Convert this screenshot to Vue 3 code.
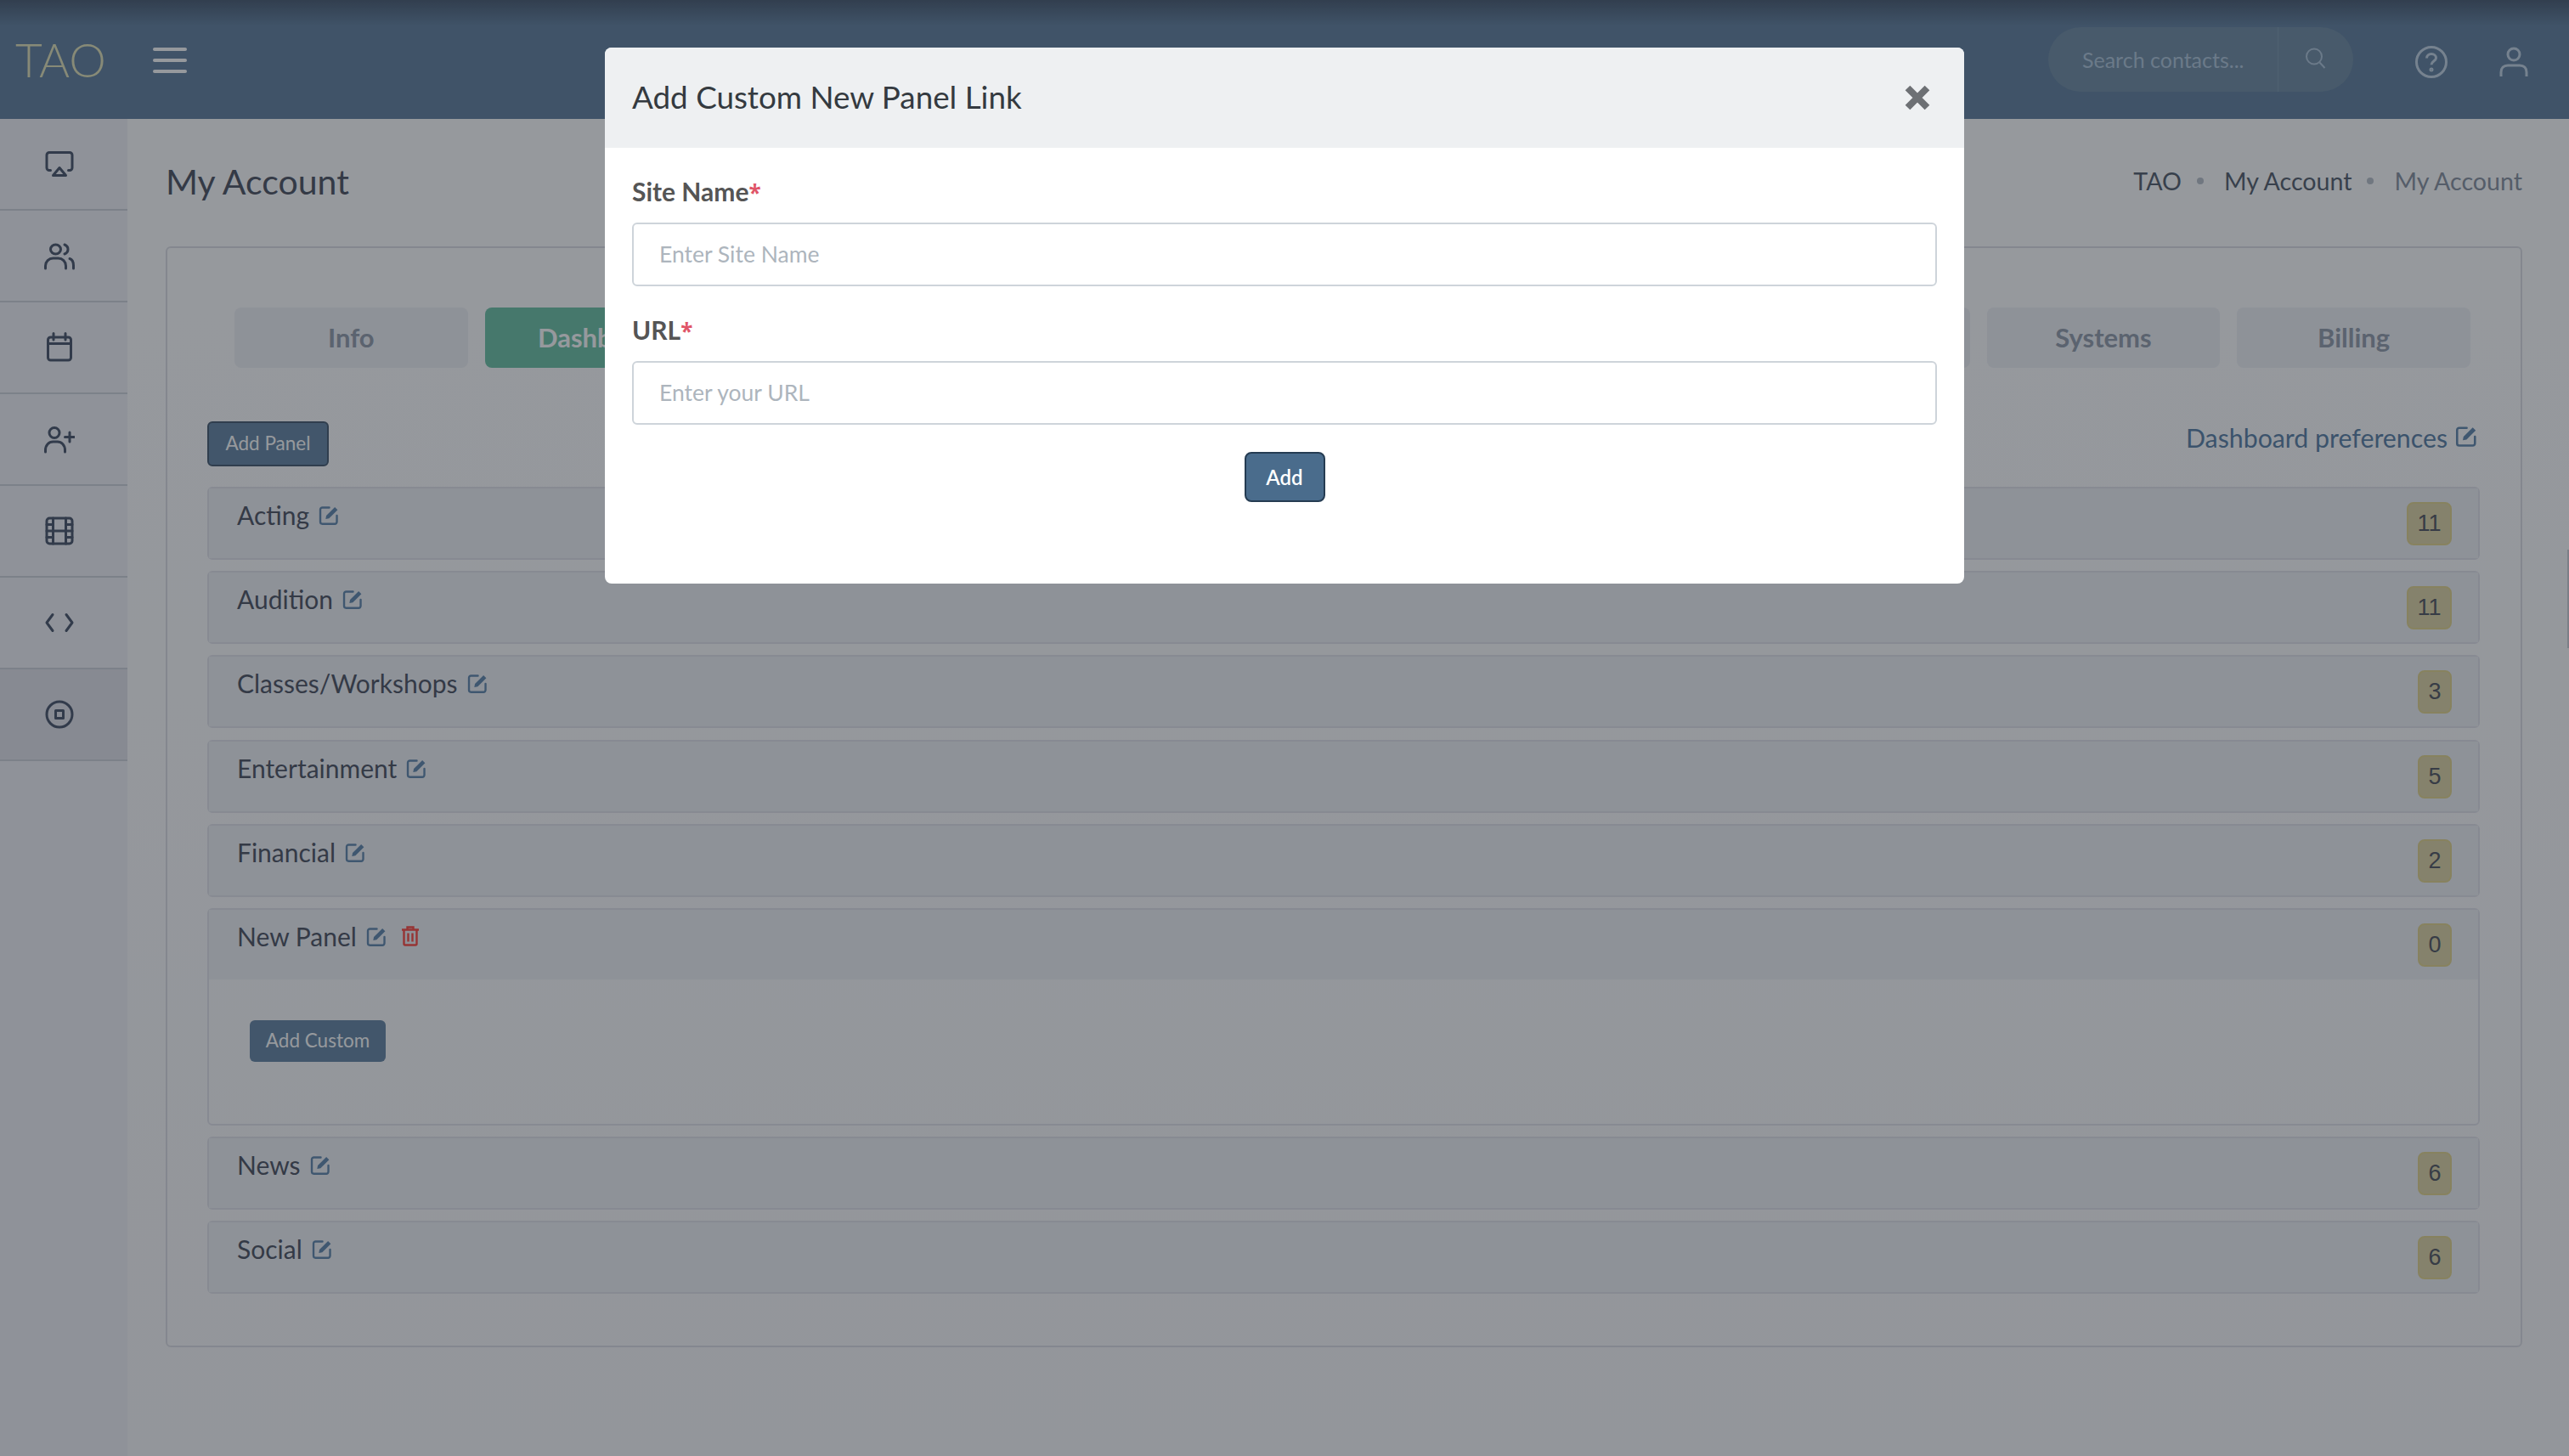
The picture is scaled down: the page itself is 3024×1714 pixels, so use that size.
<template>
  <div class="page">
    <header class="topbar">
      <div class="logo">TAO</div>
      <button class="burger"><span></span><span></span><span></span></button>
      <div class="top-right">
        <div class="search">
          <input class="search-input" placeholder="Search contacts..." />
          <span class="search-btn">
            <svg width="30" height="30" viewBox="0 0 30 30" fill="none" stroke="currentColor" stroke-width="2"><circle cx="13" cy="12.5" r="9" /><path d="M19.5 19.5l6 6.5" /></svg>
          </span>
        </div>
        <svg class="help" width="40" height="40" viewBox="0 0 40 40" fill="none" stroke="currentColor" stroke-width="3"><circle cx="20" cy="20" r="17.5" /><path d="M14.5 15.5c0-3 2.5-5 5.5-5s5.5 2 5.5 4.8c0 3.2-5.5 3.8-5.5 8" /><circle cx="20" cy="29" r="1" /></svg>
        <svg class="user" width="34" height="38" viewBox="0 0 34 38" fill="none" stroke="currentColor" stroke-width="3"><circle cx="17" cy="10" r="7" /><path d="M2 36v-5c0-5 3-8 8-8h14c5 0 8 3 8 8v5" /></svg>
      </div>
    </header>

    <aside class="sidebar">
      <div class="side-item">
        <svg class="side-icon" viewBox="0 0 24 24"><path d="M5 17H4a2 2 0 0 1-2-2V5a2 2 0 0 1 2-2h16a2 2 0 0 1 2 2v10a2 2 0 0 1-2 2h-1" /><path d="M12 15l5 6H7z" /></svg>
      </div>
      <div class="side-item">
        <svg class="side-icon" viewBox="0 0 36 36"><ellipse cx="13.5" cy="10.5" rx="6" ry="5.5" /><path d="M24 5c2.5 1 4 3 4 5.5s-1.5 4.5-4 5.5" /><path d="M1.5 33v-3c0-5 4-9 9-9h6c5 0 9 4 9 9v3" /><path d="M30 21.5c3 1 4.5 4.5 4.5 8V33" /></svg>
      </div>
      <div class="side-item">
        <svg class="side-icon" viewBox="0 0 36 36"><rect x="4.5" y="6" width="27" height="27" rx="3" /><path d="M4.5 13.5h27M11 1.5V9M25 1.5V9" /></svg>
      </div>
      <div class="side-item">
        <svg class="side-icon" viewBox="0 0 36 36"><circle cx="12" cy="10.5" r="6" /><path d="M1.5 33v-2c0-6 4-10 9-10h5c5 0 9 4 9 10v2" /><path d="M30 10v11M24.5 15.5h11" /></svg>
      </div>
      <div class="side-item">
        <svg class="side-icon" viewBox="0 0 24 24"><rect x="2" y="2" width="20" height="20" rx="2.18" /><path d="M7 2v20M17 2v20M2 12h20M2 7h5M2 17h5M17 17h5M17 7h5" /></svg>
      </div>
      <div class="side-item">
        <svg class="side-icon" viewBox="0 0 36 36"><path d="M10 8.5L3 18l7 9.5M26 8.5L33 18l-7 9.5" /></svg>
      </div>
      <div class="side-item active">
        <svg class="side-icon" viewBox="0 0 36 36"><circle cx="18" cy="18" r="15" /><rect x="13.5" y="13.5" width="9" height="9" /></svg>
      </div>
    </aside>

    <main class="main">
      <div class="page-head">
        <h1>My Account</h1>
        <div class="crumbs">
          <span>TAO</span><i></i><span>My Account</span><i></i><span class="current">My Account</span>
        </div>
      </div>

      <section class="card">
        <div class="tabs">
          <div v-for="(t, i) in tabs" :key="i" class="tab" :class="{ on: t === 'Dashboard' }">{{ t }}</div>
        </div>

        <div class="toolbar">
          <button class="btn add-panel">Add Panel</button>
          <a class="prefs">Dashboard preferences
            <svg class="edit big" viewBox="0 0 24 24"><path class="box" d="M12.5 3.2H5A2.2 2.2 0 0 0 2.8 5.4v13.400A2.2 2.2 0 0 0 5 21h13.6a2.2 2.2 0 0 0 2.2-2.2V12" /><path class="pen" d="M8.6 15.6l.7-3.6L18.6 2.7l3 3-9.3 9.2z" /></svg>
          </a>
        </div>

        <div v-for="p in panels" :key="p.name" class="panel">
          <div class="panel-head">
            <div class="panel-title">
              <span>{{ p.name }}</span>
              <svg class="edit" viewBox="0 0 24 24"><path class="box" d="M12.5 3.2H5A2.2 2.2 0 0 0 2.8 5.4v13.4A2.2 2.2 0 0 0 5 21h13.6a2.2 2.2 0 0 0 2.2-2.2V12" /><path class="pen" d="M8.6 15.6l.7-3.6L18.6 2.7l3 3-9.3 9.2z" /></svg>
              <svg v-if="p.open" class="trash" viewBox="0 0 22 24"><path d="M1 4.5h20M7.5 4V1.5h7V4M3.5 4.5V21a1.5 1.5 0 0 0 1.5 1.500h12a1.5 1.5 0 0 0 1.5-1.500V4.500" /><path d="M8.5 8.5v10M13.5 8.5v10" /></svg>
            </div>
            <span class="badge">{{ p.count }}</span>
          </div>
          <div v-if="p.open" class="panel-body">
            <button class="btn add-custom">Add Custom</button>
          </div>
        </div>
      </section>
    </main>

    <div class="edge-tab"></div>
    <div class="backdrop"></div>

    <div class="modal">
      <div class="modal-head">
        <h2>Add Custom New Panel Link</h2>
        <svg class="close" width="30" height="30" viewBox="0 0 30 30"><path d="M3.500 3.500l23 23M26.500 3.500l-23 23" /></svg>
      </div>
      <form class="modal-body" @submit.prevent>
        <label>Site Name<em>*</em></label>
        <input placeholder="Enter Site Name" />
        <label>URL<em>*</em></label>
        <input placeholder="Enter your URL" />
        <div class="actions"><button class="add-btn">Add</button></div>
      </form>
    </div>
  </div>
</template>

<script setup>
const tabs = ['Info', 'Dashboard', '', '', '', '', '', 'Systems', 'Billing']

const panels = [
  { name: 'Acting', count: 11 },
  { name: 'Audition', count: 11 },
  { name: 'Classes/Workshops', count: 3 },
  { name: 'Entertainment', count: 5 },
  { name: 'Financial', count: 2 },
  { name: 'New Panel', count: 0, open: true },
  { name: 'News', count: 6 },
  { name: 'Social', count: 6 }
]
</script>

<style>
html, body { margin: 0; overflow: hidden; }
</style>

<style scoped>
.page {
  display: grid;
  grid-template-columns: 150px 1fr;
  grid-template-rows: 140px 1fr;
  height: 1714px;
  font-family: Lato, "Open Sans", sans-serif;
  color: #202739;
}

.topbar {
  grid-column: 1 / 3;
  display: flex;
  align-items: center;
  background: linear-gradient(#1c324e 0, #3b6086 30px);
}
.logo {
  margin-left: 18px;
  width: 102px;
  font-size: 55px;
  font-weight: 300;
  color: #dcdca8;
}
.burger {
  margin: 2px 0 0 60px;
  padding: 0;
  width: 40px;
  background: none;
  border: 0;
  display: flex;
  flex-direction: column;
  gap: 9px;
}
.burger span {
  height: 4px;
  border-radius: 2px;
  background: #fff;
}
.top-right {
  margin-left: auto;
  padding-right: 48px;
  display: flex;
  align-items: center;
  color: #b6cbdf;
}
.search {
  display: flex;
  width: 359px;
  height: 76px;
  border-radius: 38px;
  background: #4e708d;
  overflow: hidden;
}
.search-input {
  width: 271px;
  box-sizing: border-box;
  padding: 0 0 0 40px;
  border: 0;
  border-right: 1px solid #5f829b;
  background: none;
  font: 25px Lato, sans-serif;
  outline: 0;
}
.search-input::placeholder { color: #9db8d2; opacity: 1; }
.search-btn {
  flex: 1;
  display: flex;
  align-items: center;
  justify-content: center;
  color: #9db8d2;
  padding-bottom: 2px;
}
.help { margin: 6px 0 0 72px; }
.user { margin: 6px 0 0 60px; }

.sidebar {
  background: #eff0f6;
}
.side-item {
  height: 106px;
  border-bottom: 2px solid #c4c8d2;
  display: flex;
  align-items: center;
  justify-content: center;
  padding-right: 10px;
}
.side-item.active { background: #dddde6; }
.side-icon {
  width: 36px;
  height: 36px;
  fill: none;
  stroke: #1c2a44;
  stroke-width: 3;
  stroke-linejoin: round;
  stroke-linecap: round;
}
.side-icon[viewBox="0 0 24 24"] { stroke-width: 2; }

.main {
  padding: 0 55px 0 45px;
  background: linear-gradient(#fff, #f9f8fa);
}
.page-head {
  height: 146px;
  padding-bottom: 4px;
  display: flex;
  align-items: center;
  justify-content: space-between;
}
h1 {
  margin: 0;
  font-size: 41px;
  font-weight: 400;
  color: #202739;
}
.crumbs {
  display: flex;
  align-items: center;
  font-size: 28.6px;
  color: #2a3648;
}
.crumbs i {
  width: 8px;
  height: 8px;
  margin: 0 24px 0 18px;
  border-radius: 50%;
  background: #a9b1bd;
}
.crumbs .current { color: #6b7688; }

.card {
  border: 2px solid #d6d7df;
  border-radius: 6px;
  padding: 70px 48px 61px 47px;
}
.tabs {
  display: grid;
  grid-template-columns: repeat(9, 1fr);
  gap: 20px;
  margin: 0 11px 0 32px;
}
.tab {
  height: 71px;
  line-height: 71px;
  text-align: center;
  border-radius: 8px;
  background: #eceef4;
  font-size: 31px;
  font-weight: 700;
  color: #798496;
}
.tab.on {
  background: #49b490;
  color: #fff;
}
.toolbar {
  display: flex;
  justify-content: space-between;
  margin: 63px 0 24px;
}
.btn {
  box-sizing: border-box;
  font: 22.5px Lato, sans-serif;
  color: #fff;
  background: #40678d;
  border-radius: 6px;
  padding: 0 0 2px;
}
.add-panel {
  width: 143px;
  height: 53px;
  border: 2px solid #17304b;
}
.prefs {
  display: flex;
  align-items: flex-start;
  gap: 8px;
  margin: -1px 2px 0 0;
  font-size: 30.3px;
  line-height: 40px;
  color: #31608f;
}
.edit {
  width: 26px;
  height: 26px;
  margin-top: 5px;
  color: #3a6a98;
}
.edit.big {
  width: 28px;
  height: 28px;
  margin-top: 5px;
}
.edit .box {
  fill: none;
  stroke: currentColor;
  stroke-width: 2.2;
  stroke-linecap: round;
}
.edit .pen { fill: currentColor; }

.panel {
  border: 2px solid #dddde6;
  border-radius: 6px;
  margin-bottom: 13.2px;
  box-sizing: border-box;
}
.panel:last-child { margin-bottom: 0; }
.panel-head {
  box-sizing: border-box;
  height: 82px;
  padding: 14px 31px 0 33px;
  display: flex;
  justify-content: space-between;
  align-items: flex-start;
  background: #eceef4;
}
.panel-title {
  display: flex;
  align-items: flex-start;
  gap: 10px;
  font-size: 30px;
  line-height: 34px;
}
.trash {
  width: 22px;
  height: 24px;
  margin: 5px 0 0 6px;
  fill: none;
  stroke: #ff1a10;
  stroke-width: 2.4;
}
.badge {
  box-sizing: border-box;
  min-width: 40px;
  height: 51px;
  padding: 0 10.5px;
  margin-top: 2px;
  border: 2px solid #ddcb72;
  border-radius: 8px;
  background: #d8cb90;
  font: 27px/47px "Liberation Sans", sans-serif;
  text-align: center;
  color: #272c39;
}
.panel-body {
  height: 170px;
  box-sizing: border-box;
  padding: 48px 48px 0;
}
.add-custom {
  width: 160px;
  height: 49px;
  border: 0;
}

.edge-tab {
  position: fixed;
  right: 0;
  top: 647px;
  width: 2px;
  height: 116px;
  background: #c2c4cc;
}

.backdrop {
  position: fixed;
  inset: 0;
  background: rgba(67, 73, 80, 0.56);
}

.modal {
  position: fixed;
  top: 56px;
  left: 712px;
  width: 1600px;
  height: 631px;
  background: #fff;
  border-radius: 8px;
  overflow: hidden;
}
.modal-head {
  box-sizing: border-box;
  height: 118px;
  padding: 0 32px 3px;
  display: flex;
  align-items: center;
  justify-content: space-between;
  background: #eef0f2;
}
h2 {
  margin: 0;
  font-size: 36.8px;
  font-weight: 400;
  color: #343a40;
}
.close {
  margin: 3px 8px 0 0;
  fill: none;
  stroke: #6d7074;
  stroke-width: 8;
}
.modal-body {
  display: flex;
  flex-direction: column;
  padding: 32px 32px 0;
}
label {
  height: 38px;
  font-size: 30px;
  line-height: 38px;
  font-weight: 700;
  color: #555;
  margin-bottom: 18px;
}
label em {
  font-family: "Open Sans", sans-serif;
  font-size: 26px;
  line-height: 0;
  font-style: normal;
  font-weight: 700;
  color: #e05568;
}
.modal-body input {
  box-sizing: border-box;
  height: 75px;
  padding: 0 30px 1px;
  border: 2px solid #ced4da;
  border-radius: 6px;
  margin-bottom: 32px;
  font: 26.5px Lato, sans-serif;
  outline: 0;
}
.modal-body input::placeholder { color: #adb5bd; opacity: 1; }
.actions { display: flex; justify-content: center; }
.add-btn {
  width: 95px;
  height: 59px;
  padding: 0;
  border: 2px solid #253c52;
  border-radius: 8px;
  background: #4a6c8c;
  color: #fff;
  font: 600 24px Lato, sans-serif;
}
</style>
